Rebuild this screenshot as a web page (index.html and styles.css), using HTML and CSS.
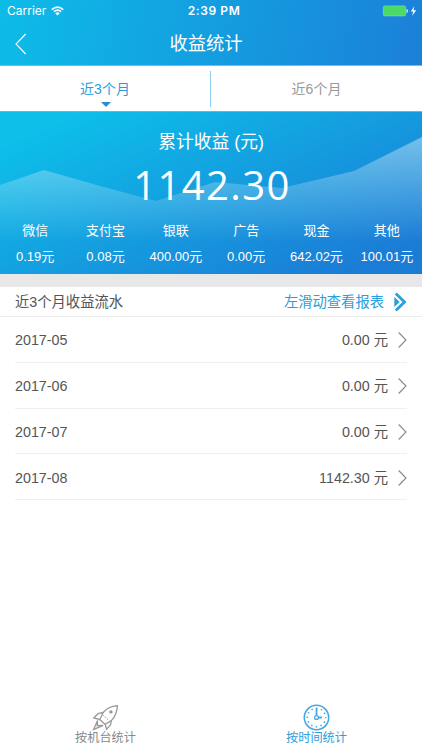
FILE: index.html
```
<!DOCTYPE html>
<html lang="zh-CN">
<head>
    <meta charset="UTF-8">
    <title>收益统计</title>
    <link rel="stylesheet" href="styles.css">
</head>
<body>
<!-- 顶部 -->
<header class="header">
    <div class="status">
        <div class="carrier">
            <span>Carrier</span>
            <svg width="13" height="10" viewBox="0 0 13 10" fill="none" stroke="#fff" stroke-width="1.6">
                <path d="M.8 3.6Q6.5-1.4 12.2 3.6M2.9 5.7Q6.5 2.5 10.1 5.7"/>
                <path d="M4.3 7.2Q6.5 5.2 8.7 7.2L6.5 9.6Z" fill="#fff" stroke="none"/>
            </svg>
        </div>
        <div class="time">2:39 PM</div>
        <div class="battery">
            <svg width="36" height="12" viewBox="0 0 36 12">
                <rect x="1.3" y=".9" width="22.4" height="10" rx="1.5" fill="#4cd964" stroke="#8bdcc0" stroke-width=".6"/>
                <path d="M24.5 4q1.4 0 1.4 2t-1.4 2z" fill="#e3f5ff"/>
                <path d="M32.3 1.2L28.8 6.5h2.4l-1 4.2 4-5.5h-2.6z" fill="#fff"/>
            </svg>
        </div>
    </div>
    <div class="nav">
        <svg class="back" width="12" height="22" viewBox="0 0 12 22" fill="none" stroke="#fff" stroke-width="1.1">
            <path d="M10.7 1L1 11l9.7 10"/>
        </svg>
        <h1>收益统计</h1>
    </div>
</header>

<!-- 切换 -->
<div class="tabs">
    <div class="tab active">近3个月</div>
    <div class="tab">近6个月</div>
</div>

<!-- 累计收益 -->
<section class="total">
    <svg class="hills" width="422" height="162" viewBox="0 0 422 162">
        <defs>
            <linearGradient id="hill" gradientUnits="userSpaceOnUse" x1="0" y1="25" x2="0" y2="130">
                <stop offset="0" stop-color="#fff" stop-opacity=".4"/>
                <stop offset="1" stop-color="#fff" stop-opacity="0"/>
            </linearGradient>
        </defs>
        <path d="M0 73L44 58L100 74L156 89L215 70L282 76L354 59L422 25V162H0Z" fill="url(#hill)"/>
    </svg>
    <div class="total-title">累计收益 (元)</div>
    <div class="total-num">1142.30</div>
    <ul class="ways">
        <li><span>微信</span><span>0.19元</span></li>
        <li><span>支付宝</span><span>0.08元</span></li>
        <li><span>银联</span><span>400.00元</span></li>
        <li><span>广告</span><span>0.00元</span></li>
        <li><span>现金</span><span>642.02元</span></li>
        <li><span>其他</span><span>100.01元</span></li>
    </ul>
</section>

<!-- 流水列表 -->
<section class="flow">
    <div class="flow-head">
        <span>近3个月收益流水</span>
        <span class="report">左滑动查看报表
            <svg width="13" height="20" viewBox="0 0 13 20">
                <path d="M1.8 1.5L10.5 10L1.8 18.5" fill="none" stroke="#2b9edb" stroke-width="2.8"/>
                <path d="M.3 5L5.6 10L.3 15Z" fill="#2b9edb"/>
            </svg>
        </span>
    </div>
    <ul class="list">
        <li><span>2017-05</span><span class="money">0.00 元</span><svg width="9" height="16" viewBox="0 0 9 16"><path d="M.7.5L8 8L.7 15.5"/></svg></li>
        <li><span>2017-06</span><span class="money">0.00 元</span><svg width="9" height="16" viewBox="0 0 9 16"><path d="M.7.5L8 8L.7 15.5"/></svg></li>
        <li><span>2017-07</span><span class="money">0.00 元</span><svg width="9" height="16" viewBox="0 0 9 16"><path d="M.7.5L8 8L.7 15.5"/></svg></li>
        <li><span>2017-08</span><span class="money">1142.30 元</span><svg width="9" height="16" viewBox="0 0 9 16"><path d="M.7.5L8 8L.7 15.5"/></svg></li>
    </ul>
</section>

<!-- 底部导航 -->
<footer class="footer">
    <div class="foot-item">
        <svg width="27" height="27" viewBox="0 0 27 27" fill="none" stroke="#999" stroke-width="1.3">
            <path d="M25.4 1.6Q16 2.4 11.2 8.5L7.8 15.5L13.2 20.4L19.3 16.6Q25 11 25.4 1.6Z"/>
            <path d="M11.2 8.5L6 9.7L1.8 14L7.8 15.5M19.3 16.6L18.5 21L14.5 25.2L13.2 20.4"/>
            <path d="M5.6 16.4L1.6 25.4L11.2 21.4M5.6 16.4L5.2 21.6L11.2 21.4"/>
            <circle cx="18.9" cy="7.9" r="1.7" fill="#999" stroke="none"/>
            <path d="M11.3 11.3L16.5 16.3" stroke-width="1" stroke-dasharray="1.5 1"/>
        </svg>
        <span>按机台统计</span>
    </div>
    <div class="foot-item active">
        <svg width="27" height="27" viewBox="0 0 27 27" fill="none" stroke="#43a9e0">
            <circle cx="13.5" cy="13.5" r="12.2" stroke-width="1.6"/>
            <circle cx="13.5" cy="13.5" r="9.2" stroke-width="1.5" stroke-dasharray="1.5 3.317" stroke-dashoffset=".75"/>
            <circle cx="13.5" cy="13.5" r="1.9" stroke-width="1.3"/>
            <path d="M13.5 4.5V11.6M15.4 13.5H19" stroke-width="1.8"/>
        </svg>
        <span>按时间统计</span>
    </div>
</footer>
</body>
</html>
```
FILE: styles.css
```
* {
    margin: 0;
    padding: 0;
    box-sizing: border-box;
}

body {
    width: 422px;
    height: 750px;
    display: flex;
    flex-direction: column;
    overflow: hidden;
    background: #fff;
    color: #555;
    font: 14.3px/20px "Liberation Sans", "Noto Sans CJK SC", sans-serif;
}

li {
    list-style: none;
}

svg {
    display: block;
    flex: none;
}

/* 顶部 */
.header {
    height: 66px;
    background: linear-gradient(100deg, #0dbce8, #1b80d8);
    border-bottom: 1px solid #63c5ee;
    color: #fff;
}

.status {
    height: 22px;
    display: grid;
    grid-template-columns: 1fr auto 1fr;
    align-items: center;
    padding: 0 4px 0 7px;
    font: 12px/22px Inter, sans-serif;
}

.carrier {
    display: flex;
    align-items: center;
    gap: 5px;
}

.time {
    padding-left: 3px;
    font-weight: 600;
    letter-spacing: .6px;
}

.battery {
    justify-self: end;
}

.nav {
    height: 43px;
    display: grid;
    grid-template-columns: 1fr auto 1fr;
    align-items: center;
    padding: 0 25px 0 15px;
}

.nav h1 {
    font-size: 18.3px;
    font-weight: normal;
}

/* 切换 */
.tabs {
    height: 45px;
    display: flex;
    align-items: center;
}

.tab {
    position: relative;
    width: 211px;
    height: 36px;
    line-height: 36px;
    font-size: 14px;
    text-align: center;
    color: #999;
}

.tab.active {
    color: #2b9edb;
    border-right: 1px solid #8bcdf0;
}

.tab.active::after {
    content: "";
    position: absolute;
    left: 101px;
    bottom: 0;
    border: 5px solid transparent;
    border-top-color: #2490cf;
    border-bottom: 0;
}

/* 累计收益 */
.total {
    position: relative;
    height: 163px;
    border-top: 1px solid #4fc0e8;
    background: linear-gradient(155deg, #0dbfe9 10%, #1b7cd6 90%);
    color: #fff;
    text-align: center;
}

.hills {
    position: absolute;
    left: 0;
    top: 0;
}

.total-title,
.total-num,
.ways {
    position: relative;
}

.total-title {
    padding-top: 18px;
    font-size: 17.8px;
    line-height: 24px;
}

.total-num {
    height: 62px;
    padding-left: 2px;
    font: 40px/62px "Open Sans", sans-serif;
    letter-spacing: 1.4px;
}

.ways {
    display: flex;
    padding-top: 4px;
    font-size: 13px;
}

.ways li {
    flex: 1;
}

.ways span {
    display: block;
    height: 26px;
    line-height: 21px;
    white-space: nowrap;
}

/* 流水列表 */
.flow {
    border-top: 13px solid #e8e8e8;
}

.flow-head {
    height: 30px;
    display: flex;
    align-items: center;
    justify-content: space-between;
    padding: 0 15px;
    border-bottom: 1px solid #ebebeb;
}

.report {
    display: flex;
    align-items: center;
    gap: 10px;
    color: #2b9edb;
}

.list {
    padding: 0 15px;
}

.list li {
    height: 45.75px;
    display: flex;
    align-items: center;
    padding-top: 2px;
    border-bottom: 1px solid #efefef;
}

.money {
    margin-left: auto;
    margin-right: 10px;
}

.list path {
    fill: none;
    stroke: #888;
    stroke-width: 1.1;
}

/* 底部导航 */
.footer {
    height: 47px;
    margin-top: auto;
    display: flex;
    font-size: 12.2px;
    line-height: 16px;
    color: #888;
}

.foot-item {
    flex: 1;
    display: flex;
    flex-direction: column;
    align-items: center;
}

.foot-item svg {
    margin-top: 1px;
}

.foot-item.active {
    color: #2b9edb;
}

.foot-item span {
    margin-top: -1px;
}
```
